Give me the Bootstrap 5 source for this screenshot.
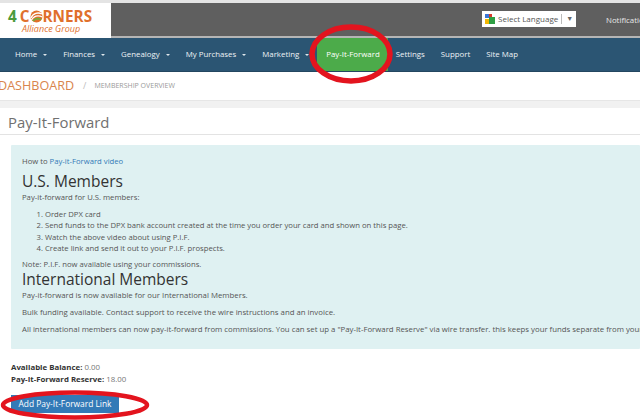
<!DOCTYPE html>
<html lang="en">
<head>
<meta charset="utf-8">
<title>Pay-It-Forward</title>
<link href="https://cdn.jsdelivr.net/npm/bootstrap@5.3.0/dist/css/bootstrap.min.css" rel="stylesheet">
<style>
html,body{width:640px;height:420px;overflow:hidden;background:#fff;}
body{font-family:"Open Sans","Liberation Sans",sans-serif;font-size:7.7px;color:#555;position:relative;}
.top-strip{height:3px;background:#e4e4e4;}
.top-bar{height:35px;background:#5f5f5f;border-bottom:2px solid #b5b5b5;}
.logo-box{width:111px;height:35px;background:#fff;padding:6px 0 0 8px;flex:none;}
.logo-main{font-size:15.300px;font-weight:700;line-height:14px;color:#e0702c;white-space:nowrap;display:flex;align-items:center;height:14px;}
.logo-main .four{color:#4c9a3c;margin-right:3px;}
.logo-sub{font-size:9px;font-style:italic;color:#e0702c;line-height:10px;padding-left:14px;white-space:nowrap;margin-top:1px;}
.lang-box{width:94px;height:16px;background:#fff;padding:0 3px;font-size:8px;color:#555;gap:3px;position:absolute;left:482px;top:11px;white-space:nowrap;}
.lang-sep{width:1px;height:10px;background:#bbb;flex:none;}
.lang-arrow{font-size:7px;color:#666;padding-left:1px;}
.notif{position:absolute;left:606px;top:15px;width:34px;overflow:hidden;color:#e8e8e8;font-size:7.85px;white-space:nowrap;}
.main-nav{height:34px;background:#2b5573;border-bottom:1px solid #234760;padding-left:7px;}
.main-nav .nav-link{color:#eef2f5;font-size:7.85px;line-height:33px;padding:0 8px;height:33px;white-space:nowrap;}
.nav-caret{display:inline-block;width:0;height:0;border-left:2px solid transparent;border-right:2px solid transparent;border-top:2px solid #dfe7ec;margin-left:6px;vertical-align:1px;}
.main-nav .nav-link.on{background:#4cab4a;color:#fff;padding:0 8px 0 9px;}
.crumb-bar{height:29px;background:#fff;border-bottom:1px solid #e6e6e6;margin-left:-2px;}
.crumb-main{font-size:12.600px;color:#d9854d;line-height:1;}
.crumb-sep{color:#bbb;font-size:9px;margin:0 8px 0 9px;}
.crumb-sub{font-size:7px;color:#999;}
.gray-gap{height:7px;background:#f1f1f1;}
.title-bar{height:27px;border-bottom:1px solid #e3e3e3;padding:2px 0 0 8px;}
.title-text{font-size:14.900px;color:#707070;font-weight:400;line-height:1;margin:0;}
.page-body{padding:10px 0 0 11px;white-space:nowrap;overflow:hidden;}
.info-box{width:629px;height:204px;background:#dff1f2;padding:11px 0 0 11px;color:#555;border-radius:1px;overflow:hidden;}
.info-box a{color:#337ab7;text-decoration:none;}
.info-box h3{font-size:15.500px;font-weight:400;color:#333;margin:0 0 2px;line-height:18px;}
.info-box h3.head-first{margin-top:5px;}
.info-line{margin:0;line-height:11px;}
.intl-text{font-size:7.8px;}
.steps{margin:6px 0 5px;padding-left:23px;line-height:11.300px;}
.gap-para{margin:6px 0 0;}
.bal{margin:13px 0 0;line-height:11.500px;color:#777;font-size:7.85px;}
.bal b{color:#333;font-weight:700;}
.btn-add{margin-top:10px;font-size:8.400px;background:#337ab7;border:0;border-radius:0;color:#fff;padding:0 7px;height:18px;line-height:18px;display:block;width:108px;white-space:nowrap;}
.ring{position:absolute;pointer-events:none;}
.ring-a{left:308px;top:22px;}
.ring-b{left:0;top:390px;}
</style>
</head>
<body>
<div class="top-strip"></div>
<div class="top-bar d-flex">
  <div class="logo-box">
    <div class="logo-main"><span class="four">4</span><span>C</span><svg width="13" height="13" viewBox="0 0 13 13"><circle cx="6.500" cy="6.500" r="6" fill="#e0702c"/><path d="M1 8C3 3 8 2 12 4M1.500 10C4 6 8 5 12.500 7" stroke="#fff" stroke-width="1.300" fill="none"/><path d="M3 11C5 8.500 8 8 11 9.500" stroke="#6fae3f" stroke-width="1.800" fill="none"/></svg><span>RNERS</span></div>
    <div class="logo-sub">Alliance Group</div>
  </div>
</div>
<div class="lang-box d-flex align-items-center">
  <svg width="10" height="10" viewBox="0 0 10 10" class="flex-shrink-0"><rect x="0" y="0" width="4" height="4" fill="#3b78d8"/><rect x="0" y="5" width="4" height="5" fill="#f2b705"/><rect x="4" y="0" width="3" height="3" fill="#d93a2b"/><rect x="4" y="3" width="6" height="7" fill="#2f9e44"/></svg>
  <span>Select Language</span><span class="lang-sep"></span><span class="lang-arrow">▼</span>
</div>
<div class="notif">Notifications</div>
<ul class="nav main-nav flex-nowrap">
  <li class="nav-item"><a class="nav-link" href="#">Home<span class="nav-caret"></span></a></li>
  <li class="nav-item"><a class="nav-link" href="#">Finances<span class="nav-caret"></span></a></li>
  <li class="nav-item"><a class="nav-link" href="#">Genealogy<span class="nav-caret"></span></a></li>
  <li class="nav-item"><a class="nav-link" href="#">My Purchases<span class="nav-caret"></span></a></li>
  <li class="nav-item"><a class="nav-link" href="#">Marketing<span class="nav-caret"></span></a></li>
  <li class="nav-item"><a class="nav-link on" href="#">Pay-It-Forward</a></li>
  <li class="nav-item"><a class="nav-link" href="#">Settings</a></li>
  <li class="nav-item"><a class="nav-link" href="#">Support</a></li>
  <li class="nav-item"><a class="nav-link" href="#">Site Map</a></li>
</ul>
<div class="crumb-bar d-flex align-items-center">
  <span class="crumb-main">DASHBOARD</span><span class="crumb-sep">/</span><span class="crumb-sub">MEMBERSHIP OVERVIEW</span>
</div>
<div class="gray-gap"></div>
<div class="title-bar d-flex align-items-center"><h1 class="title-text">Pay-It-Forward</h1></div>
<div class="page-body">
  <div class="info-box">
    <p class="info-line">How to <a href="#">Pay-it-Forward video</a></p>
    <h3 class="head-first">U.S. Members</h3>
    <p class="info-line">Pay-it-forward for U.S. members:</p>
    <ol class="steps">
      <li>Order DPX card</li>
      <li>Send funds to the DPX bank account created at the time you order your card and shown on this page.</li>
      <li>Watch the above video about using P.I.F.</li>
      <li>Create link and send it out to your P.I.F. prospects.</li>
    </ol>
    <p class="info-line">Note: P.I.F. now available using your commissions.</p>
    <h3>International Members</h3>
    <div class="intl-text">
      <p class="info-line">Pay-it-forward is now available for our International Members.</p>
      <p class="info-line gap-para">Bulk funding available. Contact support to receive the wire instructions and an invoice.</p>
      <p class="info-line gap-para">All international members can now pay-it-forward from commissions. You can set up a "Pay-It-Forward Reserve" via wire transfer. this keeps your funds separate from your commissions.</p>
    </div>
  </div>
  <p class="bal"><b>Available Balance:</b> 0.00<br><b>Pay-It-Forward Reserve:</b> 18.00</p>
  <a class="btn btn-add" href="#">Add Pay-It-Forward Link</a>
</div>
<svg class="ring ring-a" width="88" height="64" viewBox="0 0 88 64"><ellipse cx="43" cy="32" rx="39" ry="27" fill="none" stroke="#e3141e" stroke-width="5.500"/></svg>
<svg class="ring ring-b" width="152" height="30" viewBox="0 0 152 30"><ellipse cx="75" cy="15" rx="72" ry="12.500" fill="none" stroke="#e3141e" stroke-width="4.500"/></svg>
</body>
</html>
